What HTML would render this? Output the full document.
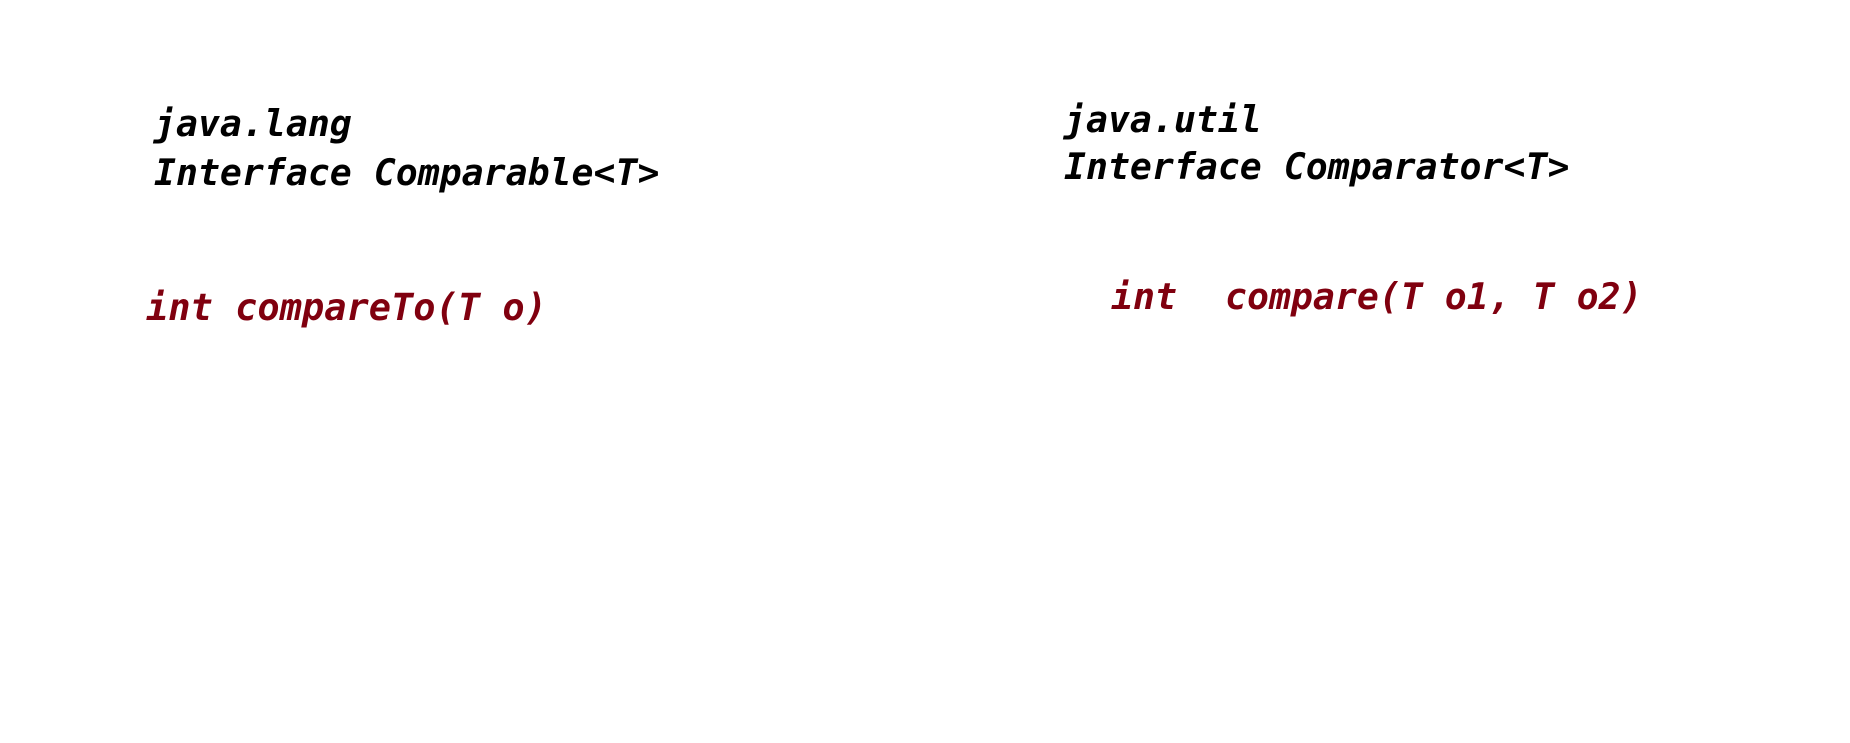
<!DOCTYPE html>
<html><head><style>
html,body{margin:0;padding:0;background:#fff;width:1850px;height:743px;overflow:hidden;}
div{position:absolute;font-family:"DejaVu Sans Mono","Liberation Mono",monospace;font-weight:bold;font-style:italic;line-height:1;white-space:pre;font-size:36.5px;}
.k{color:#000;}
.red{color:#80000f;}
</style></head><body>
<div class="k" style="left:154px;top:106px">java.lang</div>
<div class="k" style="left:154px;top:155px">Interface Comparable&lt;T&gt;</div>
<div class="red" style="left:146px;top:289px;font-size:37px">int compareTo(T o)</div>
<div class="k" style="left:1064px;top:102px">java.util</div>
<div class="k" style="left:1064px;top:149px">Interface Comparator&lt;T&gt;</div>
<div class="red" style="left:1111px;top:279px">int</div>
<div class="red" style="left:1225px;top:279px">compare(T o1, T o2)</div>
</body></html>
